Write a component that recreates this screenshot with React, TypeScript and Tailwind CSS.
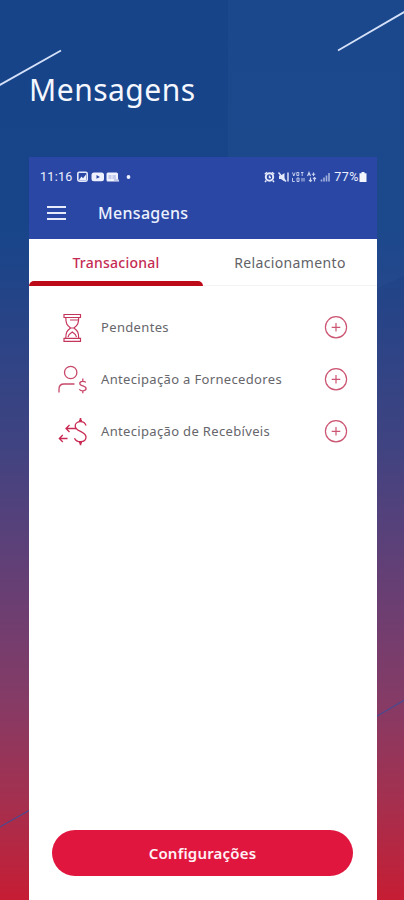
import type { ReactNode } from 'react'

interface MessageRow {
  label: string
  icon: ReactNode
}

function HourglassIcon() {
  return (
    <svg className="h-8 w-8" viewBox="0 0 32 32" fill="none" stroke="#c5365c" strokeWidth="1.2">
      <path d="M8 2.500h16.500v3H8zM8 26.300h16.500v3H8z" />
      <path d="M9.800 5.500c0 6 1 7.700 4.800 10.500-3.800 2.800-4.800 4.500-4.800 10.300M22.700 5.500c0 6-1 7.700-4.800 10.500 3.800 2.800 4.800 4.500 4.800 10.300M12 25c.5-2.300 1.500-3.300 4.300-5 2.700 1.700 3.700 2.700 4.200 5M14 8h8M14.600 16h3.300" />
    </svg>
  )
}

function SupplierIcon() {
  return (
    <svg className="h-8 w-8" viewBox="0 0 32 32" fill="none" stroke="#c8486a" strokeWidth="1.3">
      <circle cx="14.700" cy="8.500" r="6.200" />
      <path d="M3 28.500v-3.200c0-3.500 2-5.300 5-5.300h10.500" />
      <path d="M29.800 18.500c-1-1.500-6-1.700-6 1 0 3 6.300 1.900 6.300 5.100 0 2.900-5.600 2.700-6.800.6M26.800 14.500v2.700M26.800 26.700v2.600" />
    </svg>
  )
}

function ReceivablesIcon() {
  return (
    <svg className="h-8 w-8" viewBox="0 0 32 32" fill="none" stroke="#c92a53" strokeWidth="1.3">
      <path d="M30 9.500c-.8-2.500-2.500-3.800-5.500-3.800-3.200 0-5.300 1.900-5.300 4.200 0 6.200 10.800 4.600 10.800 11.200 0 2.800-2.200 4.600-5.500 4.600-2.900 0-5-1.200-6-3.500" />
      <path d="M24.500 2v3.500M24.500 25.700v3.500M23 4.500h3M23 26.700h3" strokeWidth="1.600" />
      <path d="M20 12.500H10M13.500 9 10 12.500l3.500 3.500M11.500 22.500H3.300M6.800 19l-3.500 3.500L6.800 26" />
    </svg>
  )
}

function PlusIcon() {
  return (
    <svg className="relative -top-px h-6 w-6" viewBox="0 0 24 24" fill="none" stroke="#cb5572" strokeWidth="1.2">
      <circle cx="12" cy="12.300" r="10.600" />
      <path d="M12 8v8.600M7.700 12.300h8.600" />
    </svg>
  )
}

function NotificationIcons() {
  return (
    <svg className="ml-1 h-3 w-[56px]" viewBox="0 0 56 12">
      <rect x="0.800" y="1.300" width="9.400" height="8.800" rx="1.500" fill="none" stroke="#e4e9fb" strokeWidth="1.6" />
      <path d="M2 9l2.500-3.500L6 7.200 9 3.500V9z" fill="#eef1ff" />
      <rect x="14.500" y="1.500" width="12.500" height="8.800" rx="2.500" fill="#eef1ff" />
      <path d="M19.500 4v3.800l3.400-1.900z" fill="#2a47a5" />
      <path d="M31 1.500h8.500q1.500 0 1.500 1.500v4.500l1.200 3H31Q29.500 10.500 29.500 9V3q0-1.500 1.500-1.500z" fill="#eef1ff" />
      <path d="M31.500 5h3M31.500 7h3M35.500 5H39M35.500 7H39M37 9h4" stroke="#8795cd" strokeWidth=".8" />
      <circle cx="51.500" cy="6" r="1.900" fill="#eef1ff" />
    </svg>
  )
}

function SystemIcons() {
  return (
    <svg className="mr-[3px] h-3 w-[67px]" viewBox="0 0 67 12" fill="none" stroke="#e4e9fb">
      <circle cx="5.500" cy="6" r="3.700" strokeWidth="2" />
      <path d="M5.500 4.500V6.500H7M.8 3.200 3 1.200M10.200 3.200 8 1.200M2.300 9.500 1 11M8.700 9.500l1.300 1.500" strokeWidth="1.5" />
      <path d="M15 4.500h2L20.500 2v8.500L17 8h-2z" fill="#e4e9fb" stroke="none" />
      <path d="M14.500 1.500l7.500 9M24 1.500v9" strokeWidth="1.4" />
      <path d="M28.500 1.500l1.300 3.500 1.300-3.500M32.800 1.500v3h2v-3zM37 1.500h2.500M38.200 1.500V5M28.500 7v3.500h2.200M33 7h2v3.500h-2zM38 7v3.500M40 7v3.500" strokeWidth="1" opacity=".8" />
      <path d="M43.500 5l1.500-3.500L46.500 5M44 3.700h2M49.500 1.500V5M47.800 3.300h3.400M46.500 6.500v4M45 9l1.500 1.500L48 9M50.500 10.500v-4M49 8l1.500-1.500L52 8" strokeWidth="1.1" opacity=".85" />
      <path d="M57.500 10.500V8.500M60 10.500V6.500M62.500 10.500V4.500M65 10.500V2" strokeWidth="1.6" opacity=".65" />
    </svg>
  )
}

const rows: MessageRow[] = [
  { label: 'Pendentes', icon: <HourglassIcon /> },
  { label: 'Antecipação a Fornecedores', icon: <SupplierIcon /> },
  { label: 'Antecipação de Recebíveis', icon: <ReceivablesIcon /> }
]

function Backdrop() {
  return (
    <svg className="absolute inset-0 h-[900px] w-[404px]" viewBox="0 0 404 900" fill="none">
      <path d="M228 0H404V276L376 289 228 355z" fill="#4670a8" fillOpacity=".1" />
      <path d="M-2 86 61 50.500M338 50.500 406 11" stroke="#d5e1f8" strokeWidth="1.8" />
      <path d="M-2 828 30 810M374 718 406 699" stroke="#4a4a90" strokeWidth="1.2" />
    </svg>
  )
}

export default function App() {
  return (
    <div className="relative h-[900px] w-[404px] overflow-hidden bg-[linear-gradient(180deg,#174489_0px,#18458a_230px,#264487_310px,#414381_450px,#5d4078_550px,#853b66_700px,#a4304f_800px,#c61d34_900px)] font-['Noto_Sans',sans-serif]">
      <Backdrop />
      <div className="relative flex h-full flex-col pl-[29px] pr-[27px]">
        <h1 className="flex h-[157px] shrink-0 items-start pt-[69px] text-[30px] leading-[41px] tracking-[0.5px] text-[#f5f7ff]">
          Mensagens
        </h1>

        <div className="flex flex-1 flex-col bg-white">
          <header className="h-[82px] bg-[#2a47a5] text-[#edf1ff]">
            {/* Status bar */}
            <div className="flex h-[40px] items-center justify-between pl-[11px] pr-[10px] font-['Roboto',sans-serif] text-[12.5px]">
              <div className="flex items-center">
                <span className="tracking-[0.3px]">11:16</span>
                <NotificationIcons />
              </div>
              <div className="flex items-center">
                <SystemIcons />
                <span className="tracking-[0.5px]">77%</span>
                <svg className="h-3 w-2" viewBox="0 0 8 12" fill="#f3f5ff">
                  <path d="M2.500 1h3v1.300H7.500V11H.5V2.300h2z" />
                </svg>
              </div>
            </div>
            {/* Title bar */}
            <div className="flex h-[31px] items-center pl-[18px]">
              <div className="flex w-[19px] flex-col gap-[4px]">
                <span className="h-[2px] bg-[#e6eafb]" />
                <span className="h-[2px] bg-[#e6eafb]" />
                <span className="h-[2px] bg-[#e6eafb]" />
              </div>
              <span className="ml-[32px] text-[16px] font-medium tracking-[0.3px]">Mensagens</span>
            </div>
          </header>

          <nav className="flex h-[47px] text-[14px]">
            <div className="flex w-[174px] flex-col justify-between text-[#c52a53]">
              <span className="pt-[14px] text-center font-medium leading-[20px] tracking-[0.25px]">Transacional</span>
              <span className="h-[5px] rounded-t-[5px] bg-[#bd0a19]" />
            </div>
            <div className="flex-1 border-b border-[#f3f3f4] pt-[14px] text-center leading-[20px] tracking-[0.35px] text-[#626267]">
              Relacionamento
            </div>
          </nav>

          <ul className="flex flex-1 flex-col pt-[16px]">
            {rows.map((row) => (
              <li key={row.label} className="flex h-[52px] items-center pl-[27px] pr-[29px]">
                {row.icon}
                <span className="ml-[13px] flex-1 whitespace-nowrap text-[13px] tracking-[0.34px] text-[#66666b]">
                  {row.label}
                </span>
                <PlusIcon />
              </li>
            ))}
          </ul>

          <button className="ml-[23px] mr-[24px] mb-[24px] h-[46px] rounded-full bg-[#e1163f] text-[15px] font-semibold tracking-[0.2px] text-[#fff1f5]">
            Configurações
          </button>
        </div>
      </div>
    </div>
  )
}
